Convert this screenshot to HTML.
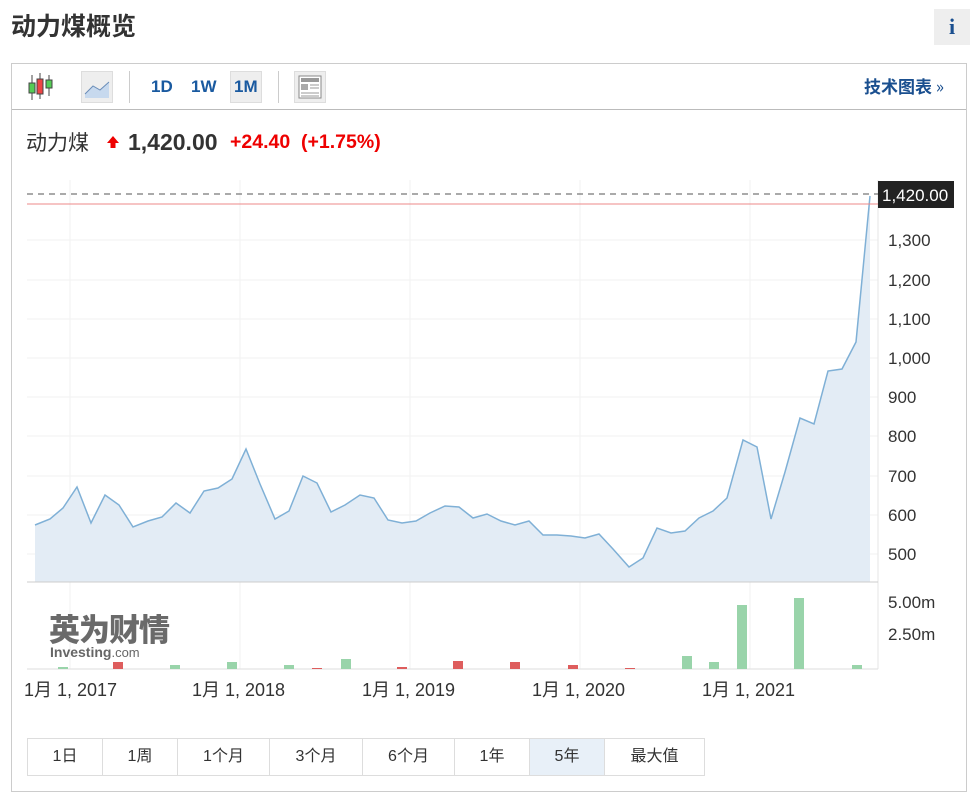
<!DOCTYPE html>
<html><head><meta charset="utf-8"><style>
body{margin:0;background:#fff;width:978px;height:801px;overflow:hidden;font-family:"Liberation Sans","Noto Sans CJK SC",sans-serif;position:relative}
.a{position:absolute}
h1{position:absolute;left:11px;top:7px;margin:0;font-size:25px;font-weight:bold;color:#333;font-family:"Noto Sans CJK SC",sans-serif}
.info{left:934px;top:9px;width:36px;height:36px;background:#eee;color:#1a4f8f;font:bold 22px "Liberation Serif",serif;text-align:center;line-height:36px}
.panel{left:11px;top:63px;width:956px;height:729px;border:1px solid #ccc;box-sizing:border-box}
.tb{left:12px;top:109px;width:954px;height:1px;background:#bbb}
.tf{font-weight:bold;color:#1a5aa0;font-size:17px;top:77px}
.btns{left:27px;top:738px;height:38px;display:flex;border:1px solid #ddd;box-sizing:border-box}
.btns div{border-right:1px solid #ddd;text-align:center;line-height:36px;font-size:16px;color:#333}
</style></head><body>
<h1>动力煤概览</h1>
<div class="a info">i</div>
<div class="a panel"></div>
<div class="a tb"></div>
<svg class="a" style="left:27px;top:72px" width="30" height="30"><g stroke="#444"><line x1="5" y1="3" x2="5" y2="28"/><line x1="13" y1="1" x2="13" y2="27"/><line x1="22" y1="3" x2="22" y2="24"/></g><rect x="2" y="11" width="6" height="10" fill="#5c5" stroke="#444"/><rect x="10" y="7" width="6" height="15" fill="#e44" stroke="#444"/><rect x="19" y="8" width="6" height="8" fill="#5c5" stroke="#444"/></svg>
<div class="a" style="left:81px;top:71px;width:32px;height:32px;background:#eee;border:1px solid #ddd;box-sizing:border-box"><svg width="30" height="30"><path d="M3 22 L11 14 L18 18 L27 10 L27 26 L3 26Z" fill="#c7d9ee"/><path d="M3 22 L11 14 L18 18 L27 10" stroke="#6a8db8" fill="none"/></svg></div>
<div class="a" style="left:129px;top:71px;width:1px;height:32px;background:#ccc"></div>
<div class="a tf" style="left:151px">1D</div>
<div class="a tf" style="left:191px">1W</div>
<div class="a" style="left:230px;top:71px;width:32px;height:32px;background:#eee;border:1px solid #ddd;box-sizing:border-box"></div>
<div class="a tf" style="left:234px">1M</div>
<div class="a" style="left:278px;top:71px;width:1px;height:32px;background:#ccc"></div>
<div class="a" style="left:294px;top:71px;width:32px;height:32px;background:#eee;border:1px solid #ddd;box-sizing:border-box"><svg width="30" height="30"><rect x="4" y="4" width="22" height="22" fill="#fff" stroke="#888"/><rect x="6" y="6" width="18" height="4" fill="#999"/><rect x="6" y="12" width="7" height="6" fill="#aaa"/><g stroke="#999"><line x1="15" y1="13" x2="24" y2="13"/><line x1="15" y1="16" x2="24" y2="16"/><line x1="6" y1="21" x2="24" y2="21"/><line x1="6" y1="24" x2="24" y2="24"/></g></svg></div>
<div class="a" style="left:864px;top:76px;font-weight:bold;color:#1a4f8f;font-size:17px;font-family:'Noto Sans CJK SC',sans-serif;line-height:20px">技术图表 <span style="font-weight:normal;font-size:17px">»</span></div>
<div class="a" style="left:26px;top:128px;font-size:21px;color:#333;font-family:'Noto Sans CJK SC',sans-serif;line-height:28px">动力煤</div>
<svg class="a" style="left:106px;top:135px" width="14" height="14"><path d="M7 1 L13 8 L9.5 8 L9.5 13 L4.5 13 L4.5 8 L1 8Z" fill="#e00"/></svg>
<div class="a" style="left:128px;top:129px;font-size:23px;font-weight:bold;color:#333">1,420.00</div>
<div class="a" style="left:230px;top:131px;font-size:19.5px;font-weight:bold;color:#e00">+24.40 &nbsp;(+1.75%)</div>
<svg class="a" style="left:0;top:0" width="978" height="801">
<g stroke="#f2f2f2"><line x1="70" y1="180" x2="70" y2="669"/><line x1="240" y1="180" x2="240" y2="669"/><line x1="410" y1="180" x2="410" y2="669"/><line x1="580" y1="180" x2="580" y2="669"/><line x1="750" y1="180" x2="750" y2="669"/>
<line x1="27" y1="240" x2="878" y2="240"/><line x1="27" y1="280" x2="878" y2="280"/><line x1="27" y1="319" x2="878" y2="319"/><line x1="27" y1="358" x2="878" y2="358"/><line x1="27" y1="397" x2="878" y2="397"/><line x1="27" y1="436" x2="878" y2="436"/><line x1="27" y1="476" x2="878" y2="476"/><line x1="27" y1="515" x2="878" y2="515"/><line x1="27" y1="554" x2="878" y2="554"/></g>
<line x1="878" y1="180" x2="878" y2="669" stroke="#e6e6e6"/>
<path d="M35 525 L50 519 L63 508 L77 487 L91 523 L105 495 L119 505 L133 527 L148 521 L162 517 L176 503 L190 513 L204 491 L218 488 L232 479 L246 449 L260 484 L275 519 L289 511 L303 476 L317 483 L331 512 L345 505 L360 495 L374 498 L388 520 L402 523 L416 521 L430 513 L445 506 L459 507 L473 518 L487 514 L501 521 L515 525 L529 521 L543 535 L557 535 L571 536 L585 538 L599 534 L613 549 L629 567 L643 558 L657 528 L671 533 L685 531 L699 518 L713 511 L727 498 L743 440 L757 447 L771 519 L785 472 L800 418 L814 424 L828 371 L842 369 L856 342 L870 196 L870 582 L35 582Z" fill="#e3ecf5"/>
<path d="M35 525 L50 519 L63 508 L77 487 L91 523 L105 495 L119 505 L133 527 L148 521 L162 517 L176 503 L190 513 L204 491 L218 488 L232 479 L246 449 L260 484 L275 519 L289 511 L303 476 L317 483 L331 512 L345 505 L360 495 L374 498 L388 520 L402 523 L416 521 L430 513 L445 506 L459 507 L473 518 L487 514 L501 521 L515 525 L529 521 L543 535 L557 535 L571 536 L585 538 L599 534 L613 549 L629 567 L643 558 L657 528 L671 533 L685 531 L699 518 L713 511 L727 498 L743 440 L757 447 L771 519 L785 472 L800 418 L814 424 L828 371 L842 369 L856 342 L870 196" fill="none" stroke="#7fb0d6" stroke-width="1.5"/>
<line x1="27" y1="582" x2="878" y2="582" stroke="#ccc"/>
<line x1="27" y1="204" x2="878" y2="204" stroke="#e88"/>
<line x1="27" y1="194" x2="878" y2="194" stroke="#555" stroke-dasharray="6,5"/>
<line x1="27" y1="669" x2="878" y2="669" stroke="#ddd"/>
<g fill="#99d4aa"><rect x="58" y="667" width="10" height="2"/><rect x="170" y="665" width="10" height="4"/><rect x="227" y="662" width="10" height="7"/><rect x="284" y="665" width="10" height="4"/><rect x="341" y="659" width="10" height="10"/><rect x="682" y="656" width="10" height="13"/><rect x="709" y="662" width="10" height="7"/><rect x="737" y="605" width="10" height="64"/><rect x="794" y="598" width="10" height="71"/><rect x="852" y="665" width="10" height="4"/></g>
<g fill="#de5d5d"><rect x="113" y="662" width="10" height="7"/><rect x="312" y="668" width="10" height="1"/><rect x="397" y="667" width="10" height="2"/><rect x="453" y="661" width="10" height="8"/><rect x="510" y="662" width="10" height="7"/><rect x="568" y="665" width="10" height="4"/><rect x="625" y="668" width="10" height="1"/></g>
<g font-size="17" fill="#333" font-family="Liberation Sans,sans-serif"><text x="888" y="246">1,300</text><text x="888" y="286">1,200</text><text x="888" y="325">1,100</text><text x="888" y="364">1,000</text><text x="888" y="403">900</text><text x="888" y="442">800</text><text x="888" y="482">700</text><text x="888" y="521">600</text><text x="888" y="560">500</text><text x="888" y="608">5.00m</text><text x="888" y="640">2.50m</text></g>
<rect x="878" y="181" width="76" height="27" fill="#222"/>
<text x="882" y="201" font-size="17" fill="#fff" font-family="Liberation Sans,sans-serif">1,420.00</text>
<g font-size="18" fill="#333" font-family="Liberation Sans,Noto Sans CJK SC,sans-serif"><text x="24" y="696">1月 1, 2017</text><text x="192" y="696">1月 1, 2018</text><text x="362" y="696">1月 1, 2019</text><text x="532" y="696">1月 1, 2020</text><text x="702" y="696">1月 1, 2021</text></g>
<text x="49" y="641" font-size="31" font-weight="900" fill="#6a6a6a" font-family="Noto Sans CJK SC,sans-serif" letter-spacing="-1">英为财情</text>
<text x="50" y="657" font-size="14" font-weight="bold" fill="#666" font-family="Liberation Sans,sans-serif">Investing<tspan font-weight="normal" font-size="13">.com</tspan></text>
</svg>
<div class="a btns"><div style="width:74px">1日</div><div style="width:74px">1周</div><div style="width:91px">1个月</div><div style="width:92px">3个月</div><div style="width:91px">6个月</div><div style="width:74px">1年</div><div style="width:74px;background:#e8f0f8">5年</div><div style="width:99px;border-right:none">最大值</div></div>
</body></html>
